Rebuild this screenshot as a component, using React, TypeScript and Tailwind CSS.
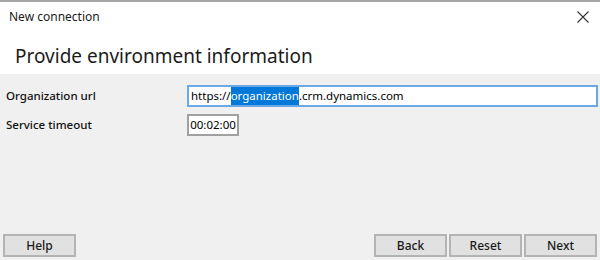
import React from 'react';

const font = { fontFamily: '"Noto Sans", "Open Sans", sans-serif' };

const DialogButton: React.FC<{ label: string }> = ({ label }) => (
  <button
    type="button"
    className="w-[73px] h-[23px] bg-[#e1e1e1] border-2 border-[#b4b4b4] text-[12px] font-medium text-[#1a1a1a] leading-none"
  >
    {label}
  </button>
);

const App: React.FC = () => {
  return (
    <div
      className="w-[600px] h-[260px] flex flex-col bg-[#f0f0f0] border-t-2 border-[#a6a6a6] text-black"
      style={font}
    >
      {/* header */}
      <div className="h-[72px] bg-white flex flex-col px-[9px]">
        <div className="flex items-center justify-between h-[30px]">
          <span className="text-[12px] text-[#1b1b1b]">New connection</span>
          <svg width="12" height="12" viewBox="0 0 12 12" className="mr-[2px]">
            <path d="M0.5 0.5 L11.5 11.5 M11.5 0.5 L0.5 11.5" stroke="#333" strokeWidth="1.1" />
          </svg>
        </div>
        <div className="pl-[6px] pt-[9px] text-[19px] leading-[30px] text-[#1b1b1b]">Provide environment information</div>
      </div>

      {/* form */}
      <div className="grid grid-cols-[181px_1fr] gap-y-[7px] pt-[11px] pl-[6px] pr-[2px] text-[11.5px]">
        <div className="flex items-center h-[22px] font-medium text-[#111]">Organization url</div>
        <div className="h-[22px] border-2 border-[#6aa8e8] bg-white flex items-center pl-[2px]">
          <span>https://</span>
          <span className="bg-[#0078d7] text-white">organization</span>
          <span>.crm.dynamics.com</span>
        </div>
        <div className="flex items-center h-[22px] font-medium text-[#111]">Service timeout</div>
        <div>
          <div className="w-[52px] h-[22px] border-2 border-[#a0a0a0] bg-white flex items-center justify-center">
            00:02:00
          </div>
        </div>
      </div>

      <div className="flex-1" />

      {/* footer */}
      <div className="flex items-center justify-between px-[3px] pb-[3px]">
        <DialogButton label="Help" />
        <div className="flex gap-[2px]">
          <DialogButton label="Back" />
          <DialogButton label="Reset" />
          <DialogButton label="Next" />
        </div>
      </div>
    </div>
  );
};

export default App;
